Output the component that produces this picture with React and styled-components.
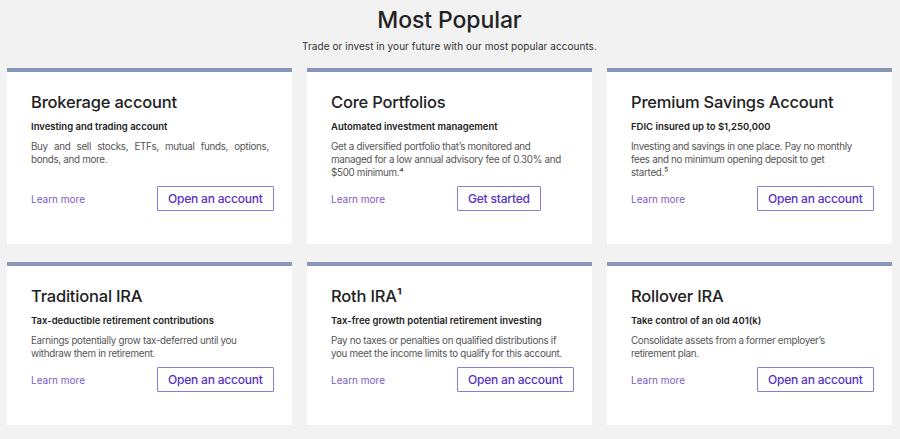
import React from "react";
import styled, { createGlobalStyle } from "styled-components";

const GlobalStyle = createGlobalStyle`
  html, body { margin: 0; padding: 0; background: #f2f2f2; }
  body { font-family: Inter, "Open Sans", Arial, sans-serif; color: #222; -webkit-font-smoothing: antialiased; }
  * { box-sizing: border-box; }
`;

const Page = styled.main`
  width: 900px;
  padding: 0 8px 16px 7px;
`;

const Header = styled.header`
  display: flex;
  flex-direction: column;
  align-items: center;
  padding-top: 6px;
`;

const Title = styled.h1`
  margin: 0;
  font-size: 23px;
  line-height: 28px;
  font-weight: 500;
  color: #222;
  letter-spacing: -0.1px;
`;

const Subtitle = styled.p`
  margin: 5px 0 0;
  font-size: 10px;
  line-height: 14px;
  color: #333;
  letter-spacing: 0.05px;
`;

const Grid = styled.section`
  display: grid;
  grid-template-columns: repeat(3, minmax(0, 1fr));
  column-gap: 15px;
  row-gap: 18px;
  margin-top: 15px;
`;

const Card = styled.article`
  display: flex;
  flex-direction: column;
  min-width: 0;
  background: #fff;
  border-top: 4px solid #8797b9;
  padding: 19px 18px 33px 24px;
`;

const CardTitle = styled.h2`
  margin: 0;
  font-size: 16.5px;
  line-height: 22px;
  font-weight: 500;
  color: #222;
  letter-spacing: -0.2px;
`;

const Tagline = styled.p`
  margin: 7px 0 0;
  font-size: 9.5px;
  line-height: 14px;
  font-weight: 600;
  color: #222;
`;

const Desc = styled.p`
  margin: 6px 0 0;
  max-width: ${(p) => p.$maxWidth || 238}px;
  font-size: 9.8px;
  line-height: 13px;
  color: #555;
  letter-spacing: -0.3px;
  text-align: ${(p) => (p.$justify ? "justify" : "left")};
`;

const Footer = styled.div`
  display: grid;
  grid-template-columns: 126px auto;
  justify-content: start;
  align-items: center;
  margin-top: auto;
  padding-top: 7px;
`;

const LearnMore = styled.a`
  font-size: 10px;
  line-height: 14px;
  color: #7b5dc4;
  text-decoration: none;
  cursor: pointer;
`;

const ActionButton = styled.button`
  height: 25px;
  padding: 0 10px;
  background: #fff;
  border: 1px solid #8f7ad4;
  border-radius: 1px;
  font-family: inherit;
  font-size: 12px;
  font-weight: 500;
  color: #5831c0;
  white-space: nowrap;
  letter-spacing: -0.2px;
  cursor: pointer;
`;

const cards = [
  {
    title: "Brokerage account",
    tagline: "Investing and trading account",
    desc: "Buy and sell stocks, ETFs, mutual funds, options, bonds, and more.",
    justify: true,
    action: "Open an account",
  },
  {
    title: "Core Portfolios",
    tagline: "Automated investment management",
    desc: "Get a diversified portfolio that’s monitored and managed for a low annual advisory fee of 0.30% and $500 minimum.⁴",
    action: "Get started",
  },
  {
    title: "Premium Savings Account",
    tagline: "FDIC insured up to $1,250,000",
    desc: "Investing and savings in one place. Pay no monthly fees and no minimum opening deposit to get started.⁵",
    descWidth: 224,
    action: "Open an account",
  },
  {
    title: "Traditional IRA",
    tagline: "Tax-deductible retirement contributions",
    desc: "Earnings potentially grow tax-deferred until you withdraw them in retirement.",
    action: "Open an account",
  },
  {
    title: "Roth IRA¹",
    tagline: "Tax-free growth potential retirement investing",
    desc: "Pay no taxes or penalties on qualified distributions if you meet the income limits to qualify for this account.",
    action: "Open an account",
  },
  {
    title: "Rollover IRA",
    tagline: "Take control of an old 401(k)",
    desc: "Consolidate assets from a former employer’s retirement plan.",
    action: "Open an account",
  },
];

export default function App() {
  return (
    <>
      <GlobalStyle />
      <Page>
        <Header>
          <Title>Most Popular</Title>
          <Subtitle>Trade or invest in your future with our most popular accounts.</Subtitle>
        </Header>
        <Grid>
          {cards.map((c) => (
            <Card key={c.title}>
              <CardTitle>{c.title}</CardTitle>
              <Tagline>{c.tagline}</Tagline>
              <Desc $justify={c.justify} $maxWidth={c.descWidth}>
                {c.desc}
              </Desc>
              <Footer>
                <LearnMore>Learn more</LearnMore>
                <ActionButton>{c.action}</ActionButton>
              </Footer>
            </Card>
          ))}
        </Grid>
      </Page>
    </>
  );
}
